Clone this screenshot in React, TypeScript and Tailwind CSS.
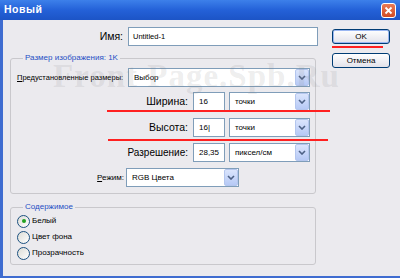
import React from "react";

function Chevron() {
  return (
    <svg width="8" height="5" viewBox="0 0 8 5">
      <path d="M1 1l3 3 3-3" fill="none" stroke="#4d6185" strokeWidth="1.6" />
    </svg>
  );
}

function Select({ value, w }: { value: string; w: string }) {
  return (
    <div className={`relative flex h-[19px] items-center border border-[#7f9db9] bg-white pl-[5px] text-[8px] ${w}`}>
      <span>{value}</span>
      <div className="absolute top-0 right-0 bottom-0 flex w-[14px] items-center justify-center rounded-[2px] border border-[#b4c6ee] bg-gradient-to-b from-[#dbe5fd] to-[#b6c9f5]">
        <Chevron />
      </div>
    </div>
  );
}

function Field({ value, w }: { value: string; w: string }) {
  return (
    <div className={`flex h-[19px] items-center border border-[#7f9db9] bg-white pl-[5px] text-[8px] ${w}`}>
      {value}
    </div>
  );
}

function Radio({ label, checked }: { label: string; checked?: boolean }) {
  return (
    <div className="flex h-[16px] items-center pl-[6px]">
      <div className="flex h-[13px] w-[13px] items-center justify-center rounded-full border border-[#1c5180] bg-gradient-to-br from-[#dcdcd6] to-white">
        {checked && <div className="h-[4px] w-[4px] rounded-full bg-[#21a121]" />}
      </div>
      <span className="ml-[2px] text-[8px]">{label}</span>
    </div>
  );
}

export default function App() {
  return (
    <div className="relative flex h-[278px] w-[400px] flex-col overflow-hidden bg-[#ebeaee] font-['Liberation_Sans',Arial,sans-serif] text-black">
      {/* title bar */}
      <div className="flex h-[20px] items-center justify-between bg-gradient-to-b from-[#3d80ea] via-[#2461d8] to-[#1c54c6] pr-[4px] pl-[4px]">
        <span className="text-[10.5px] font-bold tracking-[0.5px] text-white">Новый</span>
        <div className="flex h-[15px] w-[15px] items-center justify-center rounded-[3px] border border-white bg-gradient-to-b from-[#e97a55] to-[#d14a22]">
          <svg width="9" height="9" viewBox="0 0 9 9">
            <path d="M1.5 1.5l6 6M7.5 1.5l-6 6" stroke="white" strokeWidth="1.8" />
          </svg>
        </div>
      </div>

      {/* body */}
      <div className="flex flex-1 border-b-[2px] border-l-[3px] border-[#3f6cd0]">
        <div className="flex w-[315px] flex-col">
          <div className="mt-[7px] flex h-[19px] items-center">
            <span className="w-[120px] text-right text-[10.5px]">Имя:</span>
            <div className="ml-[5px] flex h-[19px] w-[190px] items-center border border-[#7f9db9] bg-white pl-[4px] text-[7.5px]">
              Untitled-1
            </div>
          </div>

          <fieldset className="mt-[6px] ml-[7px] w-[306px] rounded-[3px] border border-[#c9c8cc] pb-[6px]">
            <legend className="ml-[12px] px-[2px] text-[8px] leading-[12px] text-[#1f4fc4]">
              Размер изображения: 1K
            </legend>
            <div className="mt-[4px] flex h-[19px] items-center">
              <span className="w-[117px] pl-[6px] text-[7.5px] whitespace-nowrap">
                <span className="underline">П</span>редустановленные размеры:
              </span>
              <Select value="Выбор" w="w-[182px]" />
            </div>
            <div className="mt-[5px] flex h-[19px] items-center">
              <span className="w-[177px] text-right text-[10.5px]">Ширина:</span>
              <Field value="16" w="ml-[5px] w-[32px]" />
              <Select value="точки" w="ml-[4px] w-[81px]" />
            </div>
            <div className="mt-[7px] flex h-[19px] items-center">
              <span className="w-[177px] text-right text-[10.5px]">Высота:</span>
              <Field value="16|" w="ml-[5px] w-[32px]" />
              <Select value="точки" w="ml-[4px] w-[81px]" />
            </div>
            <div className="mt-[6px] flex h-[19px] items-center">
              <span className="w-[177px] text-right text-[10px]">Разрешение:</span>
              <Field value="28,35" w="ml-[5px] w-[32px]" />
              <Select value="пиксел/см" w="ml-[4px] w-[81px]" />
            </div>
            <div className="mt-[6px] flex h-[19px] items-center">
              <span className="w-[113px] text-right text-[8px]">
                <span className="underline">Р</span>ежим:
              </span>
              <Select value="RGB Цвета" w="ml-[2px] w-[113px]" />
            </div>
          </fieldset>

          <fieldset className="mt-[7px] ml-[7px] w-[306px] rounded-[3px] border border-[#c9c8cc] pb-[3px]">
            <legend className="ml-[12px] px-[2px] text-[8px] leading-[12px] text-[#1f4fc4]">
              Содержимое
            </legend>
            <Radio label="Белый" checked />
            <Radio label="Цвет фона" />
            <Radio label="Прозрачность" />
          </fieldset>
        </div>

        <div className="ml-[14px] flex flex-col">
          <button className="mt-[9px] flex h-[15px] w-[58px] items-center justify-center rounded-[3px] border border-[#003c74] bg-gradient-to-b from-white to-[#e3e2ea] text-[8px] shadow-[inset_0_0_0_1px_#9bb7f2]">
            OK
          </button>
          <button className="mt-[9px] flex h-[15px] w-[58px] items-center justify-center rounded-[3px] border border-[#003c74] bg-gradient-to-b from-white to-[#e3e2ea] text-[8px]">
            Отмена
          </button>
        </div>
      </div>

      {/* watermark */}
      <div className="pointer-events-none absolute top-[60px] left-[53px] font-['Liberation_Serif',serif] text-[33px] leading-none font-bold tracking-[1px] whitespace-nowrap text-[#808080]/15">
        Front Page.Spb.Ru
      </div>

      {/* red annotation lines */}
      <div className="absolute top-[46px] left-[332px] h-[2px] w-[51px] bg-[#ff2020]" />
      <div className="absolute top-[110px] left-[107px] h-[2px] w-[223px] bg-[#ff2020]" />
      <div className="absolute top-[139px] left-[108px] h-[2px] w-[220px] bg-[#ff2020]" />
    </div>
  );
}
